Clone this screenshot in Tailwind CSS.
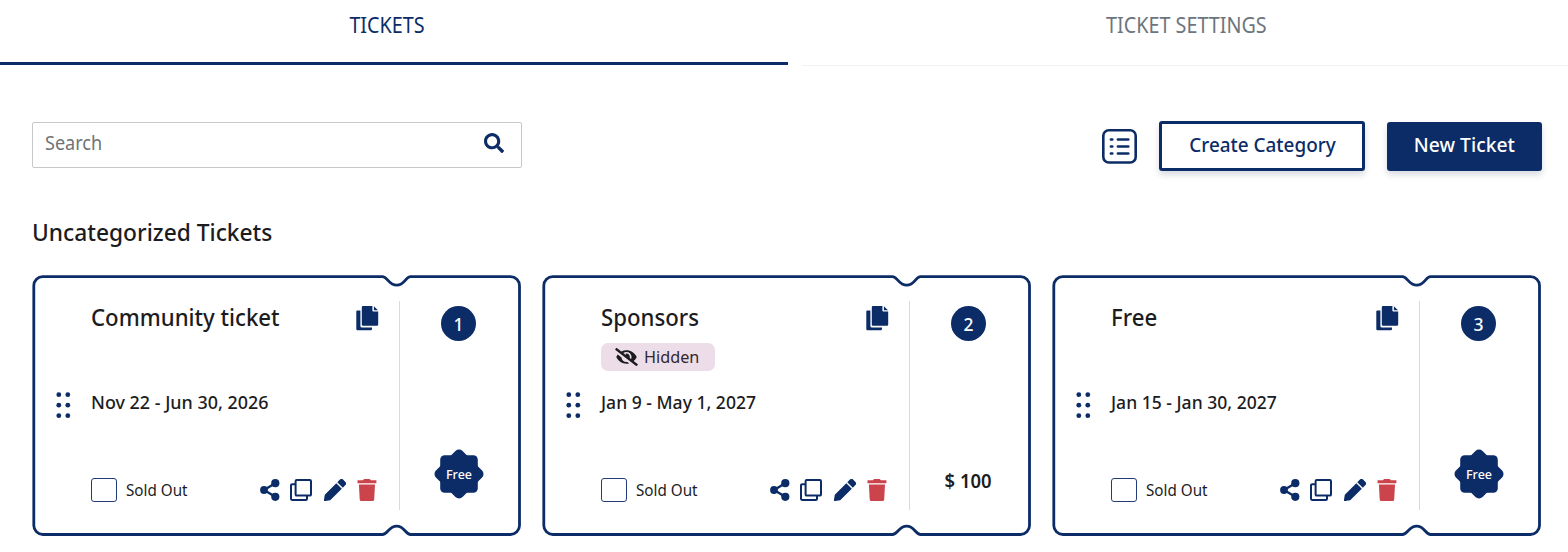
<!DOCTYPE html>
<html lang="en">
<head>
<meta charset="utf-8">
<title>Tickets</title>
<script src="https://cdn.jsdelivr.net/npm/@tailwindcss/browser@4"></script>
</head>
<body class="h-[552px] w-[1568px] overflow-hidden bg-white font-['Noto_Sans',sans-serif] text-[#1c1c1e]">
<svg class="hidden">
  <symbol id="copy" viewBox="0 0 23 25">
    <path fill="currentColor" d="M1.3 4.6H4.4V20a1.6 1.6 0 0 0 1.6 1.6H16v1.4a1.2 1.2 0 0 1-1.2 1.2H1.5a1.2 1.2 0 0 1-1.2-1.2V5.6a1 1 0 0 1 1-1Z"/>
    <path fill="currentColor" d="M7 0H16.4V4.6A1 1 0 0 0 17.4 5.6H22.2V18.6a1.2 1.2 0 0 1-1.2 1.2H7a1.2 1.2 0 0 1-1.2-1.2V1.2A1.2 1.2 0 0 1 7 0ZM17.9 0.2 22 4.3H17.9Z"/>
  </symbol>
  <symbol id="share" viewBox="0 0 22 22">
    <path stroke="currentColor" stroke-width="2.4" fill="none" d="M16.3 4.3 5 11l11.3 6.8"/>
    <g fill="currentColor"><circle cx="5" cy="11" r="3.9"/><circle cx="16.3" cy="4.2" r="4.1"/><circle cx="16.3" cy="17.8" r="4.1"/></g>
  </symbol>
  <symbol id="duplicate" viewBox="0 0 22 22">
    <g fill="none" stroke="currentColor" stroke-width="2"><rect x="5.6" y="1" width="15.4" height="15.6" rx="1.2"/><path d="M5.6 5.2H2.2A1.2 1.2 0 0 0 1 6.4V19.8A1.2 1.2 0 0 0 2.2 21H15.8A1.2 1.2 0 0 0 17 19.8V16.6"/></g>
  </symbol>
  <symbol id="pencil" viewBox="0 0 22 22">
    <path fill="currentColor" d="M12.3 4.2 17.8 9.7 6.2 21.2 1.2 22A1 1 0 0 1 0 20.8L.8 15.7ZM13.3 3.2 15.7.8a2.5 2.5 0 0 1 3.6 0L21.2 2.7a2.5 2.5 0 0 1 0 3.6L18.8 8.7Z"/>
  </symbol>
  <symbol id="trash" viewBox="0 0 20 22">
    <path fill="currentColor" d="M.5 1.3H6L6.5.5A1 1 0 0 1 7.3 0H12.5a1 1 0 0 1 .8.5l.5.8H19.4V4.2H.5ZM1.9 5.6H18L17.2 20.4A1.7 1.7 0 0 1 15.5 22H4.4A1.7 1.7 0 0 1 2.7 20.4Z"/>
  </symbol>
  <symbol id="grip" viewBox="0 0 16 28">
    <g fill="currentColor"><circle cx="3.8" cy="3.7" r="2.4"/><circle cx="12.800" cy="3.700" r="2.400"/><circle cx="3.800" cy="14.200" r="2.400"/><circle cx="12.800" cy="14.200" r="2.400"/><circle cx="3.800" cy="24.700" r="2.400"/><circle cx="12.800" cy="24.700" r="2.400"/></g>
  </symbol>
  <symbol id="outline" viewBox="0 0 489 261">
    <path fill="none" stroke="currentColor" stroke-width="2.8" d="M10.800 1.700H350.500C355.500 1.700 356.500 10.200 364.700 10.200S373.500 1.700 378.500 1.700H478.500A9 9 0 0 1 487.500 10.700V250.500A9 9 0 0 1 478.500 259.500H378.500C373.500 259.500 372.500 251.200 364.700 251.200S355.500 259.500 350.500 259.500H10.800A9 9 0 0 1 1.800 250.500V10.700A9 9 0 0 1 10.800 1.700Z"/>
  </symbol>
  <symbol id="eye-off" viewBox="0 0 640 512">
    <path fill="currentColor" d="M320 400c-75.870 0-137.250-58.710-142.900-133.110L72.200 185.820c-13.790 17.300-26.480 35.590-36.720 55.590a32.350 32.350 0 0 0 0 29.190C89.710 376.410 197.070 448 320 448c26.910 0 52.870-4 77.890-10.460L346 397.390a144.130 144.130 0 0 1-26 2.610zm313.820 58.100l-110.550-85.440a331.250 331.250 0 0 0 81.250-102.070 32.350 32.350 0 0 0 0-29.190C550.290 135.590 442.930 64 320 64a308.150 308.150 0 0 0-147.320 37.700L45.460 3.370A16 16 0 0 0 23 6.180L3.370 31.450A16 16 0 0 0 6.180 53.900l588.360 454.730a16 16 0 0 0 22.460-2.810l19.640-25.270a16 16 0 0 0-2.820-22.450zm-183.720-142l-39.300-30.380A94.750 94.750 0 0 0 416 256a94.760 94.760 0 0 0-121.310-92.210A47.650 47.650 0 0 1 304 192a46.640 46.640 0 0 1-1.540 10l-73.610-56.890A142.310 142.310 0 0 1 320 112a143.920 143.920 0 0 1 144 144c0 21.630-5.290 41.790-13.900 60.110z"/>
  </symbol>
</svg>

<nav class="flex h-[66px]">
  <div class="h-[65px] w-[788px] border-b-[3px] border-[#0c2c67] pr-[14px] pt-[10px] text-center text-[21px] leading-[30px] text-[#0c2c67]"><span class="inline-block scale-x-[.94]">TICKETS</span></div>
  <div class="ml-[14px] h-[66px] flex-1 border-b border-[#f1f1f3] pl-[2px] pt-[10px] text-center text-[21px] leading-[30px] text-[#6c757d]"><span class="inline-block scale-x-[.94]">TICKET SETTINGS</span></div>
</nav>

<main class="pl-[32px] pr-[26px]">
  <div class="flex items-start pt-[55px]">
    <div class="mt-[0.5px] flex h-[46px] w-[490px] justify-between rounded-[2px] border-[1.5px] border-[#c9c9cc] pl-3 pr-[17px]">
      <span class="mt-[4px] origin-left scale-x-[.95] text-[19px] leading-[32px] text-[#6f7376]">Search</span>
      <svg class="mt-[10.5px] h-[20px] w-[20px] text-[#0c2c67]" viewBox="0 0 512 512"><path fill="currentColor" d="M505 442.700L405.300 343c-4.500-4.500-10.600-7-17-7H372c27.600-35.300 44-79.700 44-128C416 93.100 322.900 0 208 0S0 93.100 0 208s93.100 208 208 208c48.300 0 92.700-16.400 128-44v16.300c0 6.400 2.500 12.500 7 17l99.700 99.700c9.400 9.400 24.600 9.400 33.900 0l28.300-28.300c9.400-9.400 9.400-24.600.1-34zM208 336c-70.700 0-128-57.200-128-128 0-70.700 57.200-128 128-128 70.700 0 128 57.200 128 128 0 70.700-57.200 128-128 128z"/></svg>
    </div>
    <svg class="ml-auto mt-[7.5px] h-[35px] w-[35px] text-[#0c2c67]" viewBox="0 0 35 35" fill="none" stroke="currentColor"><rect x="1.3" y="1.3" width="32.4" height="32.2" rx="5.5" stroke-width="2.6"/><path stroke-width="2.6" stroke-linecap="round" d="M8.900 10.500h1.400M8.900 17.500h1.400M8.900 24.500h1.400M15.900 10.500h10.400M15.900 17.500h10.400M15.900 24.500h10.400"/></svg>
    <button class="ml-[22px] h-[50px] w-[206px] rounded-[3px] border-[3px] border-[#0c2c67] pb-[3px] text-[20px] font-medium leading-[30px] text-[#0c2c67] shadow-[0_4px_6px_rgba(20,30,70,0.16)]"><span class="-mx-4 inline-block scale-x-[.945] whitespace-nowrap">Create Category</span></button>
    <button class="ml-[22px] mt-px h-[49px] w-[155px] rounded-[3px] bg-[#0c2c67] pb-[3px] text-[20px] font-medium leading-[30px] text-white shadow-[0_4px_6px_rgba(20,30,70,0.16)]"><span class="inline-block scale-x-[.965]">New Ticket</span></button>
  </div>
  <h2 class="mt-[46px] h-[58px] origin-left scale-x-[.948] text-[24px] font-medium leading-[30px]">Uncategorized Tickets</h2>
  <div id="cards" class="grid grid-cols-[489px_489px_489px] gap-[21px]"></div>
</main>

<script>
const tickets = [
  { name: 'Community ticket', dates: 'Nov 22 - Jun 30, 2026', price: 0, fit: 'scale-x-[.995]' },
  { name: 'Sponsors', dates: 'Jan 9 - May 1, 2027', price: 100, hidden: true, fit: 'scale-x-[.975]' },
  { name: 'Free', dates: 'Jan 15 - Jan 30, 2027', price: 0, fit: 'scale-x-[.975]' },
];
const hiddenBadge = `<div class="flex h-[28px] w-[114px] items-center rounded-[7px] bg-[#ecdde8] pl-[14px]"><svg class="h-[18px] w-[23px]"><use href="#eye-off"/></svg><span class="ml-[6px] origin-left scale-x-[.955] text-[17px] leading-[26px] text-[#33262f]">Hidden</span></div>`;
const freeBadge = `<svg class="mt-[108px] h-[50px] w-[50px]" viewBox="-25 -25 50 50"><g fill="#0c2c67"><rect x="-18.8" y="-18.8" width="37.6" height="37.6" rx="4.5"/><rect x="-18.8" y="-18.8" width="37.6" height="37.6" rx="5" transform="rotate(45)"/></g><text y="4.6" text-anchor="middle" fill="#fff" class="text-[12.5px] font-medium">Free</text></svg>`;
const price = p => `<div class="mt-[122.5px] pl-[20px]"><span class="inline-block -translate-x-[10px] scale-x-[.9] whitespace-nowrap text-[20.5px] font-semibold leading-[32px]">$ ${p}</span></div>`;
document.getElementById('cards').innerHTML = tickets.map((t, i) => `
  <article class="relative flex h-[261px]">
    <svg class="pointer-events-none absolute inset-0 h-[261px] w-[489px] text-[#0c2c67]"><use href="#outline"/></svg>
    <div class="flex w-[58.5px] pl-[22.5px] pt-[116px] text-[#0c2c67]"><svg class="h-[28px] w-[16px]"><use href="#grip"/></svg></div>
    <div class="flex w-[308px] flex-col">
      <div class="flex h-[68px] justify-between pr-[20px] pt-[27px]">
        <h3 class="origin-left scale-x-[.925] text-[24px] font-medium leading-[30px]">${t.name}</h3>
        <svg class="mt-[4px] h-[25px] w-[23px] text-[#0c2c67]"><use href="#copy"/></svg>
      </div>
      <div class="h-[28px]">${t.hidden ? hiddenBadge : ''}</div>
      <div class="mt-[16px] text-[18px] font-medium leading-[30px]"><span class="inline-block origin-left ${t.fit}">${t.dates}</span></div>
      <div class="mt-[59px] flex h-[28px] items-center">
        <span class="h-[24px] w-[26px] rounded-[3px] border-[1.5px] border-[#233c78]"></span>
        <span class="ml-[9.5px] origin-left scale-x-[.95] text-[16px] leading-[24px]">Sold Out</span>
        <div class="ml-auto flex pr-[21.5px] text-[#0c2c67]">
          <svg class="h-[22px] w-[22px]"><use href="#share"/></svg>
          <svg class="ml-[9px] h-[22px] w-[22px]"><use href="#duplicate"/></svg>
          <svg class="ml-[12px] h-[22px] w-[22px]"><use href="#pencil"/></svg>
          <svg class="ml-[11px] h-[22px] w-[20px] text-[#cb444c]"><use href="#trash"/></svg>
        </div>
      </div>
    </div>
    <div class="mt-[26px] h-[209px] w-px bg-[#d9d9dc]"></div>
    <div class="flex w-[118px] flex-col items-center pt-[31px]">
      <div class="h-[35px] w-[35px] rounded-full bg-[#0c2c67] pt-[3px] text-center text-[17.5px] font-medium leading-[30px] text-white">${i + 1}</div>
      ${t.price ? price(t.price) : freeBadge}
    </div>
  </article>`).join('');
</script>
</body>
</html>
